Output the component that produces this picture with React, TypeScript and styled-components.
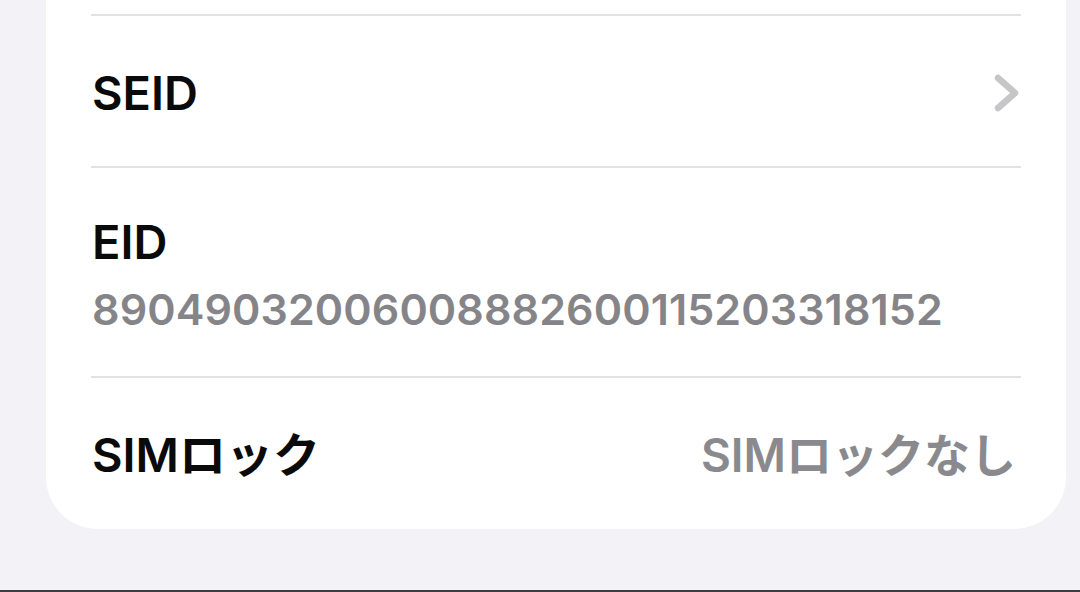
import styled, { createGlobalStyle } from 'styled-components';

const GlobalStyle = createGlobalStyle`
    html, body {
        margin: 0;
        padding: 0;
        background: #f2f2f7;
    }
    body {
        font-family: Inter, "Noto Sans CJK JP", sans-serif;
        -webkit-font-smoothing: antialiased;
    }
`;

interface InfoRow {
    label: string
    value?: string
    detail?: string
    link?: boolean
}

const rows: InfoRow[] = [
    { label: 'SEID', link: true },
    { label: 'EID', detail: '89049032006008882600115203318152' },
    { label: 'SIMロック', value: 'SIMロックなし' },
];

function Chevron() {
    return (
        <ChevronIcon viewBox="0 0 26 38" aria-hidden>
            <path d="M4 4 L21 19 L4 34" fill="none" stroke="#c6c6c9" strokeWidth="6.5" strokeLinecap="round" strokeLinejoin="round" />
        </ChevronIcon>
    );
}

export default function App(): JSX.Element {
    return (
        <Page>
            <GlobalStyle />
            <Card>
                {rows.map((row) => (
                    <Row key={row.label} $tall={!!row.detail}>
                        <RowMain>
                            <Label>{row.label}</Label>
                            {row.detail ? <Detail>{row.detail}</Detail> : null}
                        </RowMain>
                        {row.value ? <Value>{row.value}</Value> : null}
                        {row.link ? <Chevron /> : null}
                    </Row>
                ))}
            </Card>
            <Spacer />
            <BottomEdge />
        </Page>
    );
}

const Page = styled.div`
    display: flex;
    flex-direction: column;
    width: 1080px;
    height: 592px;
    overflow: hidden;
    background: #f2f2f7;
`;

const Card = styled.div`
    display: flex;
    flex-direction: column;
    margin-left: 46px;
    width: 1020px;
    padding-top: 14px;
    padding-bottom: 1px;
    background: #ffffff;
    border-radius: 0 0 52px 52px;
`;

const Row = styled.div<{ $tall: boolean }>`
    display: flex;
    align-items: center;
    justify-content: space-between;
    margin: 0 45px;
    height: ${(p) => (p.$tall ? '208px' : '150px')};
    border-top: 2px solid #e2e2e5;
`;

const RowMain = styled.div`
    display: flex;
    flex-direction: column;
    gap: 14px;
    padding-top: 4px;
`;

const Label = styled.div`
    font-size: 47px;
    font-weight: 600;
    color: #0a0a0a;
    line-height: 56px;
    padding-left: 1px;
`;

const Detail = styled.div`
    font-size: 43px;
    font-weight: 600;
    color: #858589;
    line-height: 50px;
    padding-left: 1px;
    letter-spacing: 0.1px;
`;

const Value = styled.div`
    font-size: 46px;
    font-weight: 600;
    color: #8a8a8e;
    line-height: 56px;
    padding-top: 4px;
    padding-right: 5px;
`;

const ChevronIcon = styled.svg`
    width: 26px;
    height: 38px;
    margin-right: 1px;
    margin-top: 4px;
`;

const Spacer = styled.div`
    flex: 1;
`;

const BottomEdge = styled.div`
    height: 2px;
    background: #3c3c40;
`;
